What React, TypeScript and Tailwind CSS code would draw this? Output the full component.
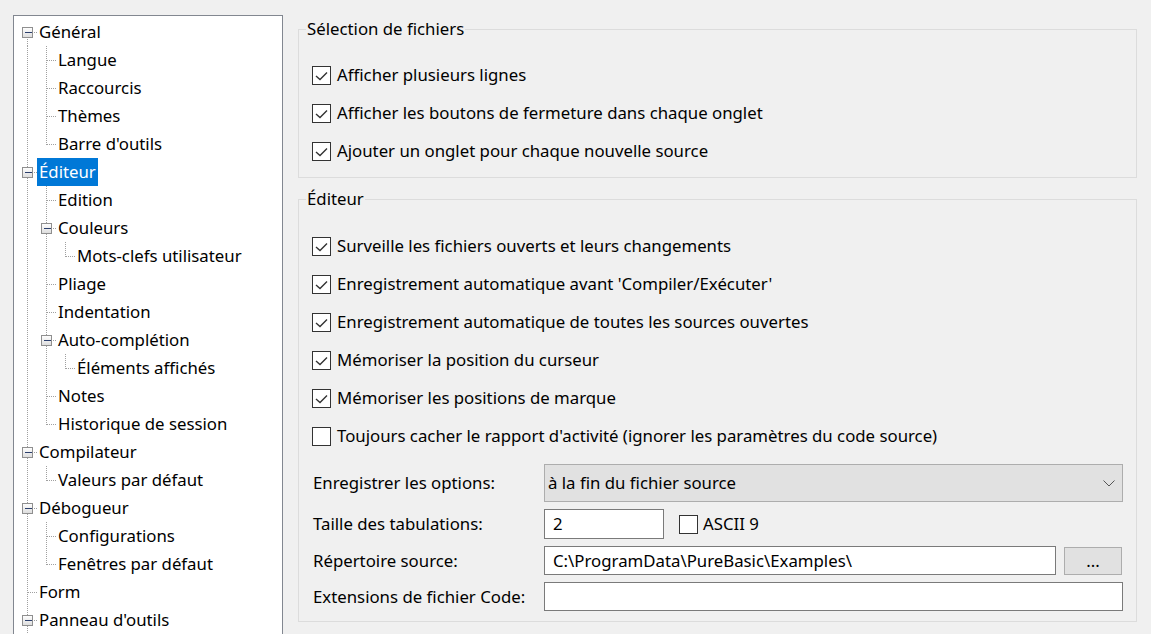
import React from 'react';

type TreeNode = { label: string; depth: number; selected?: boolean };

const TREE: TreeNode[] = [
  { label: 'Général', depth: 0 },
  { label: 'Langue', depth: 1 },
  { label: 'Raccourcis', depth: 1 },
  { label: 'Thèmes', depth: 1 },
  { label: "Barre d'outils", depth: 1 },
  { label: 'Éditeur', depth: 0, selected: true },
  { label: 'Edition', depth: 1 },
  { label: 'Couleurs', depth: 1 },
  { label: 'Mots-clefs utilisateur', depth: 2 },
  { label: 'Pliage', depth: 1 },
  { label: 'Indentation', depth: 1 },
  { label: 'Auto-complétion', depth: 1 },
  { label: 'Éléments affichés', depth: 2 },
  { label: 'Notes', depth: 1 },
  { label: 'Historique de session', depth: 1 },
  { label: 'Compilateur', depth: 0 },
  { label: 'Valeurs par défaut', depth: 1 },
  { label: 'Débogueur', depth: 0 },
  { label: 'Configurations', depth: 1 },
  { label: 'Fenêtres par défaut', depth: 1 },
  { label: 'Form', depth: 0 },
  { label: "Panneau d'outils", depth: 0 },
  // below the visible area: only kept so the guide lines continue
  { label: 'Options', depth: 1 },
  { label: 'Importer/Exporter', depth: 0 },
];
const VISIBLE = 22;

const ROW = 28;
const COL = 19;

// true when a node at `level` after index i continues before the branch closes
const continues = (i: number, level: number) => {
  for (let j = i + 1; j < TREE.length; j++) {
    if (TREE[j].depth < level) return false;
    if (TREE[j].depth === level) return true;
  }
  return false;
};

const Guides = ({ index }: { index: number }) => {
  const node = TREE[index];
  const d = node.depth;
  const hasKids = index + 1 < TREE.length && TREE[index + 1].depth > d;
  const w = COL * (d + 1);
  const mid = 14.5;
  const dot = { stroke: '#a0a0a0', strokeWidth: 1, strokeDasharray: '1 1' };
  const lines: React.ReactNode[] = [];
  for (let k = 0; k < d; k++) {
    if (continues(index, k)) {
      const x = COL * k + 9.5;
      lines.push(<line key={`v${k}`} x1={x} y1={0} x2={x} y2={ROW} {...dot} />);
    }
  }
  const cx = COL * d + 9.5;
  lines.push(
    <line key="own" x1={cx} y1={index === 0 ? mid : 0} x2={cx} y2={continues(index, d) ? ROW : mid} {...dot} />
  );
  lines.push(<line key="h" x1={cx} y1={mid} x2={COL * d + COL} y2={mid} {...dot} />);

  return (
    <svg width={w} height={ROW} className="shrink-0" shapeRendering="crispEdges">
      {lines}
      {hasKids && (
        <g>
          <defs>
            <linearGradient id={`g${index}`} x1="0" y1="0" x2="0" y2="1">
              <stop offset="0" stopColor="#ffffff" />
              <stop offset="1" stopColor="#dcdcdc" />
            </linearGradient>
          </defs>
          <rect x={cx - 5} y={9.5} width={10} height={10} fill={`url(#g${index})`} stroke="#8f8f8f" />
          <line x1={cx - 3} y1={mid} x2={cx + 4} y2={mid} stroke="#2b3f6d" strokeWidth={1} />
        </g>
      )}
    </svg>
  );
};

const Check = ({ checked }: { checked: boolean }) => (
  <span className="w-[19px] h-[19px] shrink-0 border border-[#333333] bg-white flex items-center justify-center">
    {checked && (
      <svg width="17" height="17" viewBox="0 0 17 17">
        <polyline points="3,9 7,12.5 14,5.5" fill="none" stroke="#333333" strokeWidth="1.4" />
      </svg>
    )}
  </span>
);

const CheckRow = ({ label, checked = true }: { label: string; checked?: boolean }) => (
  <div className="h-[38px] flex items-center gap-[6px]">
    <Check checked={checked} />
    <span>{label}</span>
  </div>
);

export default function App() {
  return (
    <div className="w-[1151px] h-[634px] overflow-hidden bg-[#f0f0f0] flex items-start text-[16.8px] text-black font-['Noto_Sans','Open_Sans',sans-serif] leading-[24px]">
      {/* tree */}
      <div className="ml-[13px] mt-[15px] w-[270px] h-[660px] shrink-0 border border-[#828790] bg-white pt-[2px] pl-[4px]">
        {TREE.slice(0, VISIBLE).map((n, i) => (
          <div key={i} className="h-[28px] flex items-center whitespace-nowrap">
            <Guides index={i} />
            <span className={`px-[2px] h-full flex items-center ${n.selected ? 'bg-[#0078d7] text-white' : ''}`}>
              {n.label}
            </span>
          </div>
        ))}
      </div>

      {/* panels */}
      <div className="ml-[15px] w-[839px] shrink-0 flex flex-col">
        <fieldset className="mt-[17px] border border-[#dcdcdc] p-0 m-0">
          <legend className="ml-[7px] px-[1px]">Sélection de fichiers</legend>
          <div className="pl-[13px] pt-[15px] pb-[7px]">
            <CheckRow label="Afficher plusieurs lignes" />
            <CheckRow label="Afficher les boutons de fermeture dans chaque onglet" />
            <CheckRow label="Ajouter un onglet pour chaque nouvelle source" />
          </div>
        </fieldset>

        <fieldset className="mt-[9px] border border-[#dcdcdc] p-0 m-0">
          <legend className="ml-[7px] px-[1px]">Éditeur</legend>
          <div className="pl-[13px] pr-[13px] pt-[16px] pb-[10px]">
            <CheckRow label="Surveille les fichiers ouverts et leurs changements" />
            <CheckRow label="Enregistrement automatique avant 'Compiler/Exécuter'" />
            <CheckRow label="Enregistrement automatique de toutes les sources ouvertes" />
            <CheckRow label="Mémoriser la position du curseur" />
            <CheckRow label="Mémoriser les positions de marque" />
            <CheckRow label="Toujours cacher le rapport d'activité (ignorer les paramètres du code source)" checked={false} />

            <div className="mt-[9px] flex flex-col">
              <div className="flex items-center">
                <span className="w-[232px] pl-[1px] shrink-0">Enregistrer les options:</span>
                <div className="flex-1 h-[38px] bg-[#e1e1e1] border border-[#adadad] flex items-center pl-[3px] pr-[7px]">
                  <span className="flex-1">à la fin du fichier source</span>
                  <svg width="12" height="7" viewBox="0 0 12 7">
                    <polyline points="0.5,0.5 6,6 11.5,0.5" fill="none" stroke="#555555" strokeWidth="1" />
                  </svg>
                </div>
              </div>

              <div className="mt-[7px] flex items-center">
                <span className="w-[232px] pl-[1px] shrink-0">Taille des tabulations:</span>
                <div className="w-[120px] h-[30px] bg-white border border-[#7a7a7a] flex items-center pl-[8px]">2</div>
                <div className="ml-[15px] flex items-center gap-[5px]">
                  <Check checked={false} />
                  <span>ASCII 9</span>
                </div>
              </div>

              <div className="mt-[7px] flex items-center">
                <span className="w-[232px] pl-[1px] shrink-0">Répertoire source:</span>
                <div className="w-[512px] h-[29px] bg-white border border-[#7a7a7a] flex items-center pl-[8px]">
                  C:\ProgramData\PureBasic\Examples\
                </div>
                <div className="ml-[8px] w-[58px] h-[28px] bg-[#e1e1e1] border border-[#adadad] flex items-center justify-center">
                  ...
                </div>
              </div>

              <div className="mt-[7px] flex items-center">
                <span className="w-[232px] pl-[1px] shrink-0">Extensions de fichier Code:</span>
                <div className="flex-1 h-[29px] bg-white border border-[#7a7a7a]" />
              </div>
            </div>
          </div>
        </fieldset>
      </div>
    </div>
  );
}
